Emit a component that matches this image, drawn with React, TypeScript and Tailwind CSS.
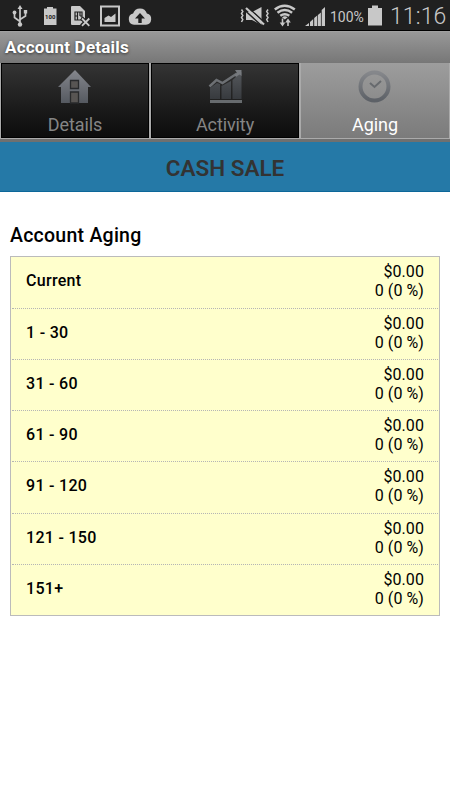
import React from "react";

const agingRows = ["Current", "1 - 30", "31 - 60", "61 - 90", "91 - 120", "121 - 150", "151+"];

function StatusBar() {
  return (
    <header className="flex h-[31px] border-b border-black bg-[#202020] text-[#c8c8c8]">
      <svg className="h-[30px] w-[34px] shrink-0" viewBox="0 0 34 30" fill="none" stroke="currentColor" strokeWidth="1.700">
        <path d="M20 8v16M20 21.500l-5.500-4v-4M20 19.500l5.500-3.500v-4" />
        <path d="M20 5l2.500 4h-5z" fill="currentColor" stroke="none" />
        <circle cx="20" cy="24.500" r="2.200" fill="currentColor" stroke="none" />
        <circle cx="14.500" cy="12.500" r="1.900" fill="currentColor" stroke="none" />
        <path d="M23.800 10h3.400v3.500h-3.400z" fill="currentColor" stroke="none" />
      </svg>
      <svg className="h-[30px] w-[32px] shrink-0" viewBox="34 0 32 30">
        <path d="M47 7h6v1.500h3.500v16.500h-12.500v-16.500h3z" fill="currentColor" />
        <text x="50.200" y="19" textAnchor="middle" fontSize="6" fontWeight="700" fill="#202020" className="font-['Roboto',sans-serif]">100</text>
      </svg>
      <svg className="h-[30px] w-[30px] shrink-0" viewBox="66 0 30 30" fill="none">
        <path d="M72 6h8l5 5v7l-3 7h-10q-1 0-1-1v-17q0-1 1-1z" fill="currentColor" />
        <path d="M75 12h7v8h-7zM75 16h2.500M80 16h2M77.500 12v8M80 12v4" stroke="#202020" strokeWidth="1.200" />
        <path d="M81.500 18l8 8M89.500 18l-8 8" stroke="#202020" strokeWidth="4" />
        <path d="M82 18.500l7.300 7.300M89.300 18.500l-7.300 7.300" stroke="currentColor" strokeWidth="1.800" />
      </svg>
      <svg className="h-[30px] w-[30px] shrink-0" viewBox="96 0 30 30">
        <path d="M101 6.500h18v19h-18z" fill="none" stroke="currentColor" strokeWidth="2" />
        <path d="M104.500 22v-4l4-2.500 2.500 1.500 4.500-3.500v8.500z" fill="currentColor" />
      </svg>
      <svg className="h-[30px] w-[30px] shrink-0" viewBox="126 0 30 30">
        <path d="M134 24.800a5.700 5.700 0 0 1-.9-11.200 7.200 7.200 0 0 1 13.800 0 5.700 5.700 0 0 1-.9 11.200z" fill="currentColor" />
        <path d="M140 13l5 5.500h-3.300v4.500h-3.400v-4.500h-3.300z" fill="#202020" />
      </svg>
      <div className="grow" />
      <svg className="h-[30px] w-[34px] shrink-0" viewBox="238 0 34 30" fill="none" stroke="currentColor">
        <path d="M241.500 9.500l1.300 2-1.300 2 1.300 2-1.300 2 1.300 2-1.300 2.500M268 9.500l-1.300 2 1.300 2-1.300 2 1.300 2-1.300 2 1.300 2.500" strokeWidth="1.500" />
        <path d="M246 12h6l9.500-5v18l-9.500-5h-6z" fill="currentColor" stroke="none" />
        <path d="M246.500 6l18 16.500M244.500 10l18 16.500" stroke="#202020" strokeWidth="1.500" />
        <path d="M246 8l18 16.500" strokeWidth="2.200" />
      </svg>
      <svg className="h-[30px] w-[30px] shrink-0" viewBox="272 0 30 30" fill="none" stroke="currentColor">
        <path d="M274.800 9.500q9.700-7.500 20 0M277.500 12.800q7.200-5.500 14.600 0M280.300 15.800q4.500-3.200 9 0" strokeWidth="2.500" />
        <path d="M282 17.200q2.800-1.700 5.600 0l-2.800 2.300z" fill="currentColor" stroke="none" />
        <path d="M282.500 18.500v6M288 26v-5" strokeWidth="1.600" />
        <path d="M279.700 22.500h5.600l-2.800 4zM285.200 22.500h5.600l-2.800-4z" fill="currentColor" stroke="none" />
      </svg>
      <svg className="h-[30px] w-[28px] shrink-0" viewBox="302 0 28 30" fill="currentColor">
        <path d="M305 26l4-3v3zM310 22l3.200-3v7h-3.200zM314.200 18l3-2.500v10.500h-3zM317.900 15l3-2.500v13.500h-3zM321.700 10l3.300-3v19h-3.300z" />
      </svg>
      <span className="w-[36px] shrink-0 whitespace-nowrap pt-[8px] text-[14px] leading-[18px]">100%</span>
      <svg className="h-[30px] w-[20px] shrink-0" viewBox="366 0 20 30">
        <path d="M372 5.500h6v2.500h4v17.500h-14v-17.500h4z" fill="currentColor" />
      </svg>
      <span className="w-[64px] shrink-0 whitespace-nowrap pl-[4px] pt-[3px] text-[23px] font-light leading-[28px] tracking-[0.1px]">11:16</span>
    </header>
  );
}

const HouseIcon = () => (
  <svg className="h-[35px] w-[34px]" viewBox="58 69 34 35">
    <defs>
      <linearGradient id="house" x2="0" y2="1"><stop stopColor="#85878d" /><stop offset="1" stopColor="#555960" /></linearGradient>
    </defs>
    <path d="M75 70l16 17h-3v16h-27v-16h-3z" fill="url(#house)" />
    <path d="M70.500 80.500h8v8h-8zM70.500 92h8v11h-8z" fill="#585553" stroke="#292a2c" strokeWidth="1.300" />
  </svg>
);

const ChartIcon = () => (
  <svg className="h-[35px] w-[34px]" viewBox="208 69 34 35">
    <defs>
      <linearGradient id="bars" x2="0" y2="1"><stop stopColor="#55585c" /><stop offset="1" stopColor="#373a3e" /></linearGradient>
    </defs>
    <path d="M210 88l7-5 3 1v15h-10zM221.500 86l9.500-5v18h-9.500zM232.500 80l9-8v27h-9z" fill="url(#bars)" />
    <path d="M209.500 86.500l7-6.500 6 3L237 73.500" fill="none" stroke="#6d7074" strokeWidth="2.500" />
    <path d="M235 70h6.500v6l-2-1.500-3.500 2.500-1.500-2 2.500-2z" fill="#777a7e" />
    <path d="M210 100h32v3h-32z" fill="#676b6e" />
  </svg>
);

const ClockIcon = () => (
  <svg className="h-[35px] w-[34px]" viewBox="358 69 34 35" fill="none">
    <defs>
      <linearGradient id="clock" x2="0" y2="1"><stop stopColor="#85878b" /><stop offset="1" stopColor="#5d6167" /></linearGradient>
    </defs>
    <circle cx="374.500" cy="86.500" r="14" stroke="url(#clock)" strokeWidth="4" />
    <path d="M370 83l4.500 4 6.500-6" stroke="#676a6e" strokeWidth="2" />
  </svg>
);

function Tab({ label, selected = false, children }: { label: string; selected?: boolean; children: React.ReactNode }) {
  return (
    <button className={selected
      ? "flex w-[148px] flex-col items-center bg-gradient-to-b from-[#9d9d9d] to-[#7b7b7b] pt-[6px] text-white"
      : "flex w-[148px] flex-col items-center border border-black bg-gradient-to-b from-[#343434] to-[#0c0c0c] pt-[5px] text-[#858585]"}>
      {children}
      <span className="mt-[10px] text-[18px] leading-[22px] tracking-[-0.1px]">{label}</span>
    </button>
  );
}

export default function App() {
  return (
    <main className="h-[800px] w-[450px] overflow-hidden bg-white font-['Roboto',sans-serif] text-black">
      <StatusBar />
      <div className="h-[31px] border-t border-[#a0a0a0] bg-gradient-to-b from-[#989898] to-[#787878] pl-[5px] pt-[4px] text-[17px] font-bold leading-[22px] tracking-[0.23px] text-white [text-shadow:0_1px_3px_#333]">Account Details</div>
      <nav className="flex h-[80px] gap-[2px] border-b-[3px] border-t border-b-[#707070] border-t-[#777] bg-[#aaa] pb-[1px] pl-px pr-px">
        <Tab label="Details"><HouseIcon /></Tab>
        <Tab label="Activity"><ChartIcon /></Tab>
        <Tab label="Aging" selected><ClockIcon /></Tab>
      </nav>
      <h1 className="flex h-[50px] items-center justify-center border-b border-[#0c6799] bg-[#2579a7] pt-[4px] text-[22.5px] font-semibold text-[#333]">CASH SALE</h1>
      <h2 className="ml-[10px] mt-[30px] h-[34px] text-[19.5px] font-medium leading-[27px] tracking-[0.25px]">Account Aging</h2>
      <section className="mx-[10px] border border-[#bbb] bg-[#ffc] px-px pt-[0.25px]">
        {agingRows.map((label) => (
          <div key={label} className="flex h-[51.25px] justify-between border-b border-dotted border-[#b5b5b5] pl-[14px] pr-[14px] last:h-[50.25px] last:border-b-0">
            <span className="pt-[14px] text-[16px] font-medium leading-[19px] tracking-[0.3px]">{label}</span>
            <span className="pt-[5px] text-right text-[16px] leading-[19px] tracking-[0.08px]">$0.00<br />0 (0 %)</span>
          </div>
        ))}
      </section>
    </main>
  );
}
